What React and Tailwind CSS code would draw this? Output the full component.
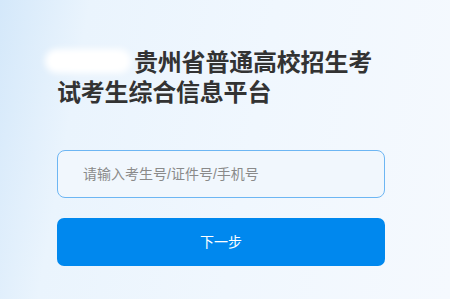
import React from "react";

export default function App() {
  return (
    <div
      className="relative w-[450px] h-[299px] overflow-hidden bg-[linear-gradient(100deg,#d4e8fa_0%,#eaf4fd_18%,#f0f7fe_55%,#f5f9fe_100%)]"
      style={{ fontFamily: '"Liberation Sans", "Noto Sans CJK SC", sans-serif' }}
    >
      <div className="flex flex-col pl-[57px] pr-[65px] pt-[48px]">
        {/* 标题 */}
        <h1 className="relative text-[24px] leading-[30px] font-bold text-[#333] tracking-[-0.2px]">
          <span className="inline-block w-[77px]" />
          贵州省普通高校招生考试考生综合信息平台
          <span className="absolute left-[-12px] top-[1px] w-[86px] h-[24px] rounded-full bg-white blur-[3px]" />
        </h1>

        {/* 输入框 */}
        <div className="mt-[42px] h-[48px] w-[328px] rounded-[8px] border border-[#6db6f3] bg-[#f1f7fd] flex items-center pl-[25px]">
          <input
            className="w-full bg-transparent outline-none text-[14px] text-[#333] placeholder:text-[#8a8a8a]"
            placeholder="请输入考生号/证件号/手机号"
          />
        </div>

        {/* 按钮 */}
        <button className="mt-[20px] h-[48px] w-[328px] rounded-[7px] bg-[#0088ee] text-white text-[14px] flex items-center justify-center">
          下一步
        </button>
      </div>
    </div>
  );
}
